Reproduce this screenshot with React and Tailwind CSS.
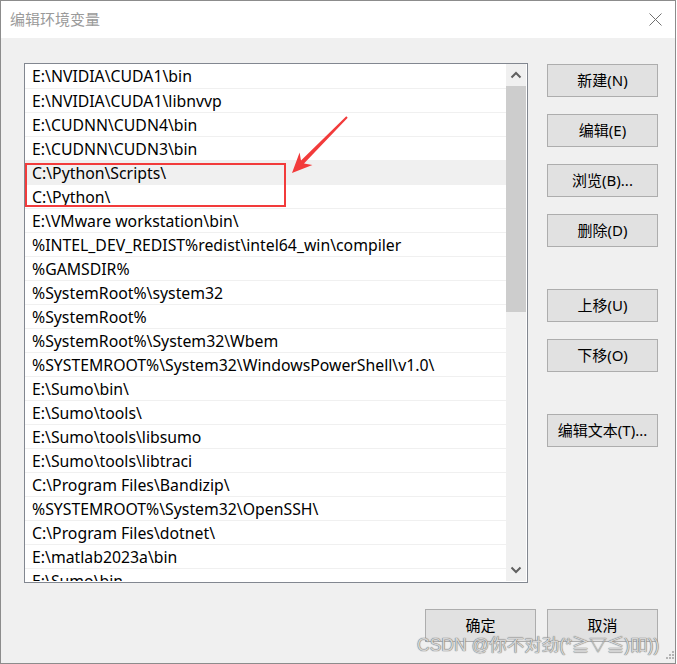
import React from "react";

const rows = [
  "E:\\NVIDIA\\CUDA1\\bin",
  "E:\\NVIDIA\\CUDA1\\libnvvp",
  "E:\\CUDNN\\CUDN4\\bin",
  "E:\\CUDNN\\CUDN3\\bin",
  "C:\\Python\\Scripts\\",
  "C:\\Python\\",
  "E:\\VMware workstation\\bin\\",
  "%INTEL_DEV_REDIST%redist\\intel64_win\\compiler",
  "%GAMSDIR%",
  "%SystemRoot%\\system32",
  "%SystemRoot%",
  "%SystemRoot%\\System32\\Wbem",
  "%SYSTEMROOT%\\System32\\WindowsPowerShell\\v1.0\\",
  "E:\\Sumo\\bin\\",
  "E:\\Sumo\\tools\\",
  "E:\\Sumo\\tools\\libsumo",
  "E:\\Sumo\\tools\\libtraci",
  "C:\\Program Files\\Bandizip\\",
  "%SYSTEMROOT%\\System32\\OpenSSH\\",
  "C:\\Program Files\\dotnet\\",
  "E:\\matlab2023a\\bin",
  "E:\\Sumo\\bin",
];

const font = { fontFamily: '"Noto Sans", "Noto Sans CJK SC", sans-serif' };

function Btn({ children, className = "" }) {
  return (
    <div
      className={
        "w-[111px] h-[33px] bg-[#e1e1e1] border border-[#adadad] flex items-center justify-center text-[15px] text-black " +
        className
      }
    >
      {children}
    </div>
  );
}

function Chevron({ up }) {
  return (
    <svg width="12" height="8" viewBox="0 0 12 8">
      <polyline
        points={up ? "1.5,6.5 6,2 10.5,6.5" : "1.5,1.5 6,6 10.5,1.5"}
        fill="none"
        stroke="#606060"
        strokeWidth="2"
      />
    </svg>
  );
}

export default function App() {
  return (
    <div
      className="relative w-[676px] h-[664px] border border-[#8c8c8c] bg-[#f0f0f0] overflow-hidden flex flex-col"
      style={font}
    >
      {/* title bar */}
      <div className="h-[37px] bg-white flex items-center justify-between pl-[9px] pr-[13px] shrink-0">
        <span
          className="text-[15px] text-[#9a9a9a]"
          style={{ fontFamily: '"Noto Sans CJK SC", sans-serif' }}
        >
          编辑环境变量
        </span>
        <svg width="13" height="13" viewBox="0 0 13 13">
          <path d="M0.5 0.5 L12.5 12.5 M12.5 0.5 L0.5 12.5" stroke="#707070" strokeWidth="1" />
        </svg>
      </div>

      {/* body */}
      <div className="flex flex-col pl-[23px] pt-[25px] pr-[17px]">
        <div className="flex items-start">
          {/* list box */}
          <div className="w-[504px] h-[520px] border border-[#828790] bg-white flex pr-[1px] pb-[1px]">
            <div className="w-[481px] h-full overflow-hidden">
              {rows.map((r, i) => (
                <div
                  key={i}
                  className={
                    "h-[24px] flex items-center pl-[7px] pt-[2px] text-[15.8px] text-black whitespace-nowrap border-t border-[#f0f0f0] first:border-t-0 " +
                    (i === 4 ? "bg-[#f0f0f0]" : "")
                  }
                >
                  {r}
                </div>
              ))}
            </div>
            <div className="w-[20px] h-full bg-[#f0f0f0] flex flex-col">
              <div className="h-[22px] flex items-center justify-center">
                <Chevron up />
              </div>
              <div className="h-[226px] bg-[#cdcdcd]" />
              <div className="flex-1" />
              <div className="h-[22px] flex items-center justify-center">
                <Chevron />
              </div>
            </div>
          </div>

          {/* right buttons */}
          <div className="ml-[19px] mt-[1px] flex flex-col">
            <Btn>新建(N)</Btn>
            <Btn className="mt-[17px]">编辑(E)</Btn>
            <Btn className="mt-[17px]">浏览(B)...</Btn>
            <Btn className="mt-[17px]">删除(D)</Btn>
            <Btn className="mt-[42px]">上移(U)</Btn>
            <Btn className="mt-[17px]">下移(O)</Btn>
            <Btn className="mt-[42px]">编辑文本(T)...</Btn>
          </div>
        </div>

        {/* bottom buttons */}
        <div className="mt-[26px] flex justify-end gap-[11px]">
          <Btn>确定</Btn>
          <Btn>取消</Btn>
        </div>
      </div>

      {/* annotations */}
      <svg
        className="absolute left-[-1px] top-[-1px] pointer-events-none"
        width="677"
        height="664"
        viewBox="0 0 677 664"
      >
        <rect x="26" y="164" width="259" height="42" fill="none" stroke="#f23b3b" strokeWidth="2" />
        <polygon
          points="292,173 299.6,152.4 301,160.6 346.3,116.3 347.7,117.7 304,163.6 312.4,165"
          fill="#f23b3b"
        />
        <g fill="#b4b4b4">
          <rect x="672" y="651" width="2" height="2" />
          <rect x="669" y="654" width="2" height="2" />
          <rect x="672" y="654" width="2" height="2" />
          <rect x="666" y="657" width="2" height="2" />
          <rect x="669" y="657" width="2" height="2" />
          <rect x="672" y="657" width="2" height="2" />
        </g>
      </svg>

      {/* watermark */}
      <div
        className="absolute left-[416px] top-[631px] text-[17.5px] text-[#d4d4d4] whitespace-nowrap pointer-events-none [text-shadow:0_0_1px_#6f6f6f,0_0_1px_#6f6f6f]"
        style={{ fontFamily: '"Liberation Sans", "Noto Sans CJK SC", sans-serif' }}
      >
        CSDN @你不对劲(*≧▽≦)吅))
      </div>
    </div>
  );
}
